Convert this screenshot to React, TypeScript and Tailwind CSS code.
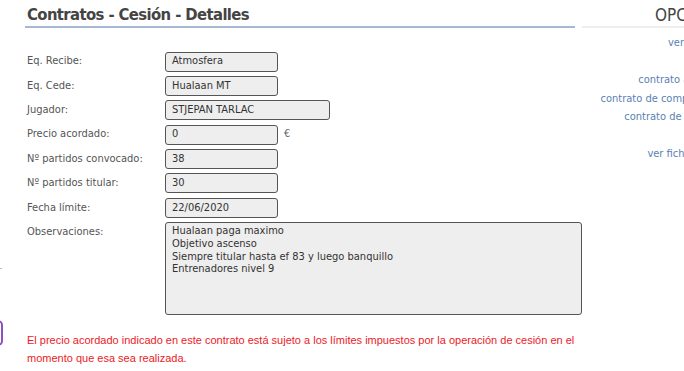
const FIELDS: { label: string; value: string; wide?: boolean; suffix?: string }[] = [
  { label: "Eq. Recibe:", value: "Atmosfera" },
  { label: "Eq. Cede:", value: "Hualaan MT" },
  { label: "Jugador:", value: "STJEPAN TARLAC", wide: true },
  { label: "Precio acordado:", value: "0", suffix: "€" },
  { label: "Nº partidos convocado:", value: "38" },
  { label: "Nº partidos titular:", value: "30" },
  { label: "Fecha límite:", value: "22/06/2020" },
];

const NOTES = [
  "Hualaan paga maximo",
  "Objetivo ascenso",
  "Siempre titular hasta ef 83 y luego banquillo",
  "Entrenadores nivel 9",
];

const OPTIONS = [
  "ver",
  "",
  "contrato actual",
  "contrato de compra inmediata",
  "contrato de cesiones",
  "",
  "ver fichajes",
];

const cond = "font-['DejaVu_Sans_Condensed','DejaVu_Sans',sans-serif]";

export default function App() {
  return (
    <div className="relative h-[371px] w-[684px] overflow-hidden bg-white">
      <div className="flex w-[800px]">
        <main className="w-[582px] shrink-0 pl-[25px]">
          <h1
            className={`mt-[5px] w-[550px] border-b-2 border-[#a5b9d4] pb-[1px] pl-[2px] text-[16.5px] font-bold leading-[20px] tracking-[-0.6px] text-[#444] ${cond}`}
          >
            Contratos - Cesión - Detalles
          </h1>

          <div className={`mt-[23.5px] flex flex-col gap-[4.4px] pl-[2px] text-[11px] ${cond}`}>
            {FIELDS.map((f) => (
              <div key={f.label} className="flex h-[20px] items-center">
                <span className="w-[138px] text-[#555]">{f.label}</span>
                <div
                  className={`flex h-[20px] items-center rounded-[3px] border border-[#555] bg-[#eeeeee] px-[6px] text-[#333] ${
                    f.wide ? "w-[165px]" : "w-[113px]"
                  }`}
                >
                  {f.value}
                </div>
                {f.suffix && <span className="ml-[6px] text-[#666]">{f.suffix}</span>}
              </div>
            ))}
            <div className="flex">
              <span className="w-[138px] pt-[2px] text-[#555]">Observaciones:</span>
              <div className="h-[93px] w-[417px] rounded-[3px] border border-[#555] bg-[#eeeeee] px-[6px] pt-[2px] leading-[12.7px] text-[#333]">
                {NOTES.map((n) => (
                  <div key={n}>{n}</div>
                ))}
              </div>
            </div>
          </div>

          <p className="mt-[16px] w-[560px] pl-[2px] font-['Liberation_Sans',Arial,sans-serif] text-[11px] leading-[18px] text-[#ec1a1f]">
            El precio acordado indicado en este contrato está sujeto a los límites impuestos por la operación de cesión en el
            momento que esa sea realizada.
          </p>
        </main>

        <aside className={`w-[188px] shrink-0 ${cond}`}>
          <div className="mt-[5px] border-b-2 border-[#eeeeee] pb-[1px] pl-[73px] text-[17px] leading-[20px] text-[#444]">
            OPCIONES
          </div>
          <ul className="mt-[6px] text-center text-[11px] leading-[18.5px] text-[#5b7fb3]">
            {OPTIONS.map((o, i) => (
              <li key={i} className="h-[18.5px]">
                {o}
              </li>
            ))}
          </ul>
        </aside>
      </div>

      <div className="absolute left-0 top-[268px] h-[1px] w-[2px] bg-[#bbb]" />
      <div className="absolute left-[-20px] top-[320px] h-[26px] w-[23px] rounded-[5px] border-2 border-[#8e4fc2]" />
    </div>
  );
}
